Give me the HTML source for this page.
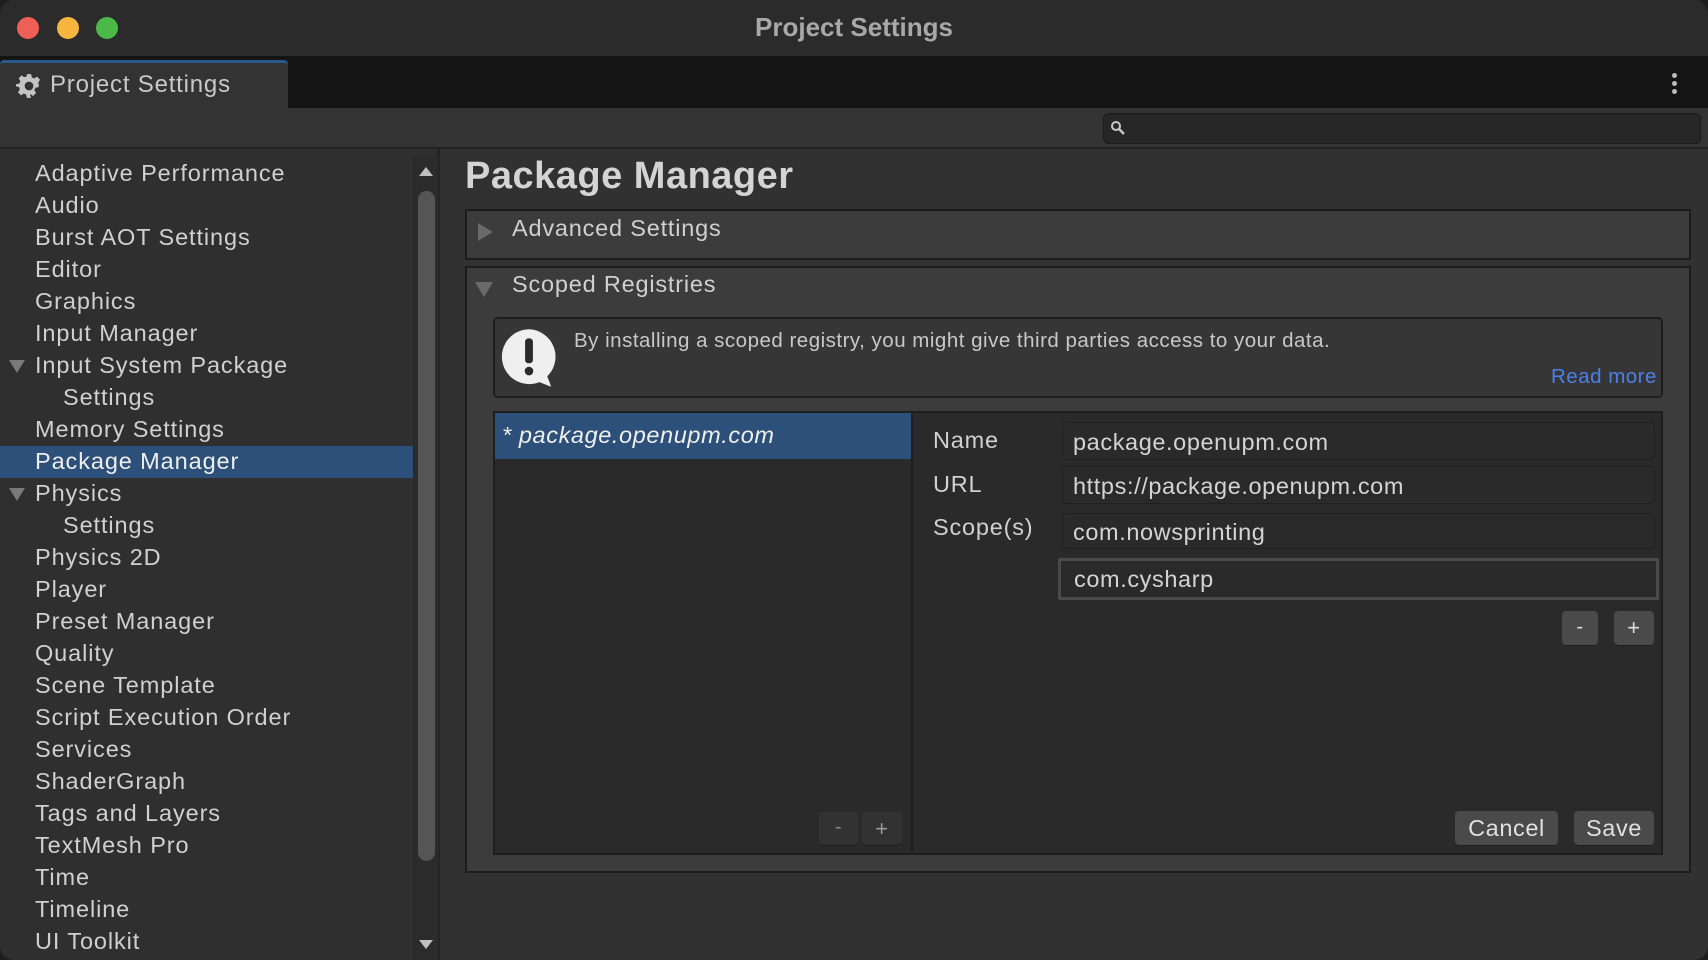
<!DOCTYPE html>
<html><head><meta charset="utf-8"><style>
*{margin:0;padding:0;box-sizing:border-box}
body{width:1708px;height:960px;background:#1e1e1e;font-family:"Liberation Sans",sans-serif;color:#d2d2d2;overflow:hidden;position:relative}
.win{position:absolute;left:0;top:0;width:1708px;height:960px;border-radius:14px;overflow:hidden;background:#313131}
.abs{position:absolute}
.title{left:0;top:0;width:1708px;height:56px;background:#2b2b2b;text-align:center;line-height:54px;font-size:26px;font-weight:bold;color:#a8a8a8}
.dot{width:22px;height:22px;border-radius:50%;top:17px}
.tabbar{left:0;top:56px;width:1708px;height:52px;background:#141414}
.tab{left:0;top:60px;width:288px;height:48px;background:#333;border-top:3px solid #2d5a8c;border-radius:4px 4px 0 0;font-size:24px;line-height:44px;padding-left:50px;color:#c8c8c8;letter-spacing:.8px}
.tool{left:0;top:108px;width:1708px;height:41px;background:#333;border-bottom:2px solid #232323}
.search{left:1103px;top:113px;width:598px;height:31px;background:#262626;border:1px solid #1a1a1a;border-radius:6px}
.side{left:0;top:149px;width:440px;height:811px;background:#2f2f2f;border-right:3px solid #252525}
.it{position:absolute;left:35px;height:32px;line-height:30px;font-size:23.5px;color:#d0d0d0;white-space:nowrap;letter-spacing:.9px}
.tri{position:absolute;left:9px;width:0;height:0;border-left:8px solid transparent;border-right:8px solid transparent;border-top:13px solid #7a7a7a}
.sel{left:0;top:446px;width:414px;height:32px;background:#2c5079}
.h1{left:465px;top:155px;font-size:38px;font-weight:bold;color:#d4d4d4;letter-spacing:.5px}
.box{background:#3c3c3c;border:2px solid #1c1c1c}
.lbl{font-size:23.5px;color:#d0d0d0;letter-spacing:.8px}
.field{position:absolute;left:1062px;width:593px;background:#2a2a2a;border:1px solid #202020;border-radius:4px;font-size:23.5px;color:#d4d4d4;padding-left:10px;letter-spacing:.6px}
.btn{position:absolute;background:#4a4a4a;border-radius:4px;color:#e0e0e0;text-align:center;box-shadow:0 1px 0 #202020;letter-spacing:.6px}
</style></head><body><div class="win">
<div class="abs title">Project Settings</div>
<div class="abs dot" style="left:17px;background:#ef5f56"></div>
<div class="abs dot" style="left:57px;background:#f5b53f"></div>
<div class="abs dot" style="left:96px;background:#4ab948"></div>
<div class="abs tabbar"></div>
<div class="abs tab">Project Settings</div>
<svg class="abs" style="left:16px;top:73px" width="26" height="26" viewBox="0 0 24 24"><path fill="#c4c4c4" d="M10 1h4l.6 3 2.2 1.1 2.6-1.7 2.8 2.8-1.7 2.6L21 11v2l-3 .6-1.1 2.2 1.7 2.6-2.8 2.8-2.6-1.7L13 20.6 14 23h-4l-.6-3-2.2-1.1-2.6 1.7-2.8-2.8 1.7-2.6L3 13l-3-.6v-2l3-.6 1.1-2.2L2.4 5 5.2 2.2l2.6 1.7L10 3z M12 8a4 4 0 1 0 0 8a4 4 0 1 0 0-8z"/></svg>
<div class="abs" style="left:1672px;top:73px;width:5px;height:5px;border-radius:50%;background:#bbb;box-shadow:0 8px 0 #bbb,0 16px 0 #bbb"></div>
<div class="abs tool"></div>
<div class="abs search"></div>
<svg class="abs" style="left:1110px;top:120px" width="16" height="16" viewBox="0 0 16 16"><circle cx="6" cy="6" r="4" stroke="#c8c8c8" stroke-width="2" fill="none"/><path d="M9 9l5 5" stroke="#c8c8c8" stroke-width="2.5"/></svg>
<div class="abs side">
<div class="abs sel" style="top:297px"></div>
<div class="it" style="top:9px">Adaptive Performance</div>
<div class="it" style="top:41px">Audio</div>
<div class="it" style="top:73px">Burst AOT Settings</div>
<div class="it" style="top:105px">Editor</div>
<div class="it" style="top:137px">Graphics</div>
<div class="it" style="top:169px">Input Manager</div>
<div class="tri" style="top:211px"></div><div class="it" style="top:201px">Input System Package</div>
<div class="it" style="top:233px;left:63px">Settings</div>
<div class="it" style="top:265px">Memory Settings</div>
<div class="it" style="top:297px;color:#eee">Package Manager</div>
<div class="tri" style="top:339px"></div><div class="it" style="top:329px">Physics</div>
<div class="it" style="top:361px;left:63px">Settings</div>
<div class="it" style="top:393px">Physics 2D</div>
<div class="it" style="top:425px">Player</div>
<div class="it" style="top:457px">Preset Manager</div>
<div class="it" style="top:489px">Quality</div>
<div class="it" style="top:521px">Scene Template</div>
<div class="it" style="top:553px">Script Execution Order</div>
<div class="it" style="top:585px">Services</div>
<div class="it" style="top:617px">ShaderGraph</div>
<div class="it" style="top:649px">Tags and Layers</div>
<div class="it" style="top:681px">TextMesh Pro</div>
<div class="it" style="top:713px">Time</div>
<div class="it" style="top:745px">Timeline</div>
<div class="it" style="top:777px">UI Toolkit</div>
<div class="abs" style="left:413px;top:8px;width:25px;height:803px;background:#2b2b2b;border-left:1px solid #262626"></div>
<div class="abs" style="left:418px;top:42px;width:17px;height:670px;background:#555;border-radius:9px"></div>
<div class="abs" style="left:419px;top:18px;border-left:7px solid transparent;border-right:7px solid transparent;border-bottom:9px solid #c0c0c0"></div>
<div class="abs" style="left:419px;top:791px;border-left:7px solid transparent;border-right:7px solid transparent;border-top:9px solid #c0c0c0"></div>
</div>
<div class="abs h1">Package Manager</div>
<div class="abs box" style="left:465px;top:209px;width:1226px;height:51px"></div>
<div class="abs" style="left:478px;top:223px;border-top:9px solid transparent;border-bottom:9px solid transparent;border-left:15px solid #6a6a6a"></div>
<div class="abs lbl" style="left:512px;top:215px">Advanced Settings</div>
<div class="abs box" style="left:465px;top:266px;width:1226px;height:607px"></div>
<div class="abs" style="left:475px;top:282px;border-left:9px solid transparent;border-right:9px solid transparent;border-top:15px solid #6a6a6a"></div>
<div class="abs lbl" style="left:512px;top:271px">Scoped Registries</div>
<div class="abs" style="left:493px;top:317px;width:1170px;height:81px;background:#363636;border:2px solid #1e1e1e;border-radius:5px"></div>
<svg class="abs" style="left:499px;top:328px" width="60" height="60" viewBox="0 0 46 46"><path fill="#efefef" d="M23 1a21 21 0 1 0 8 40.5l9 3.5-3-8A21 21 0 0 0 23 1z"/><rect x="20" y="8" width="6" height="19" rx="2.5" fill="#2b2b2b"/><circle cx="23" cy="33" r="3.3" fill="#2b2b2b"/></svg>
<div class="abs" style="left:574px;top:329px;font-size:20.5px;color:#c8c8c8;letter-spacing:.5px">By installing a scoped registry, you might give third parties access to your data.</div>
<div class="abs" style="left:1551px;top:365px;font-size:20.5px;color:#4c7fe8;letter-spacing:.5px">Read more</div>
<div class="abs" style="left:493px;top:411px;width:1170px;height:444px;background:#2a2a2a;border:2px solid #1e1e1e"></div>
<div class="abs" style="left:911px;top:413px;width:2px;height:440px;background:#1f1f1f"></div>
<div class="abs" style="left:495px;top:413px;width:416px;height:46px;background:#2c5079"></div>
<div class="abs" style="left:502px;top:422px;font-size:23.5px;font-style:italic;color:#f0f0f0;letter-spacing:.6px">* package.openupm.com</div>
<div class="btn" style="left:819px;top:812px;width:39px;height:33px;background:#323232;color:#888;line-height:31px;font-size:20px">-</div>
<div class="btn" style="left:862px;top:812px;width:40px;height:33px;background:#323232;color:#999;line-height:33px;font-size:22px">+</div>
<div class="abs lbl" style="left:933px;top:427px">Name</div>
<div class="abs lbl" style="left:933px;top:471px">URL</div>
<div class="abs lbl" style="left:933px;top:514px">Scope(s)</div>
<div class="field" style="top:422px;height:38px;line-height:38px">package.openupm.com</div>
<div class="field" style="top:466px;height:38px;line-height:38px">https://package.openupm.com</div>
<div class="field" style="top:513px;height:36px;line-height:36px">com.nowsprinting</div>
<div class="field" style="top:558px;left:1058px;width:601px;height:42px;line-height:36px;border:3px solid #4a4a4a;border-radius:2px;padding-left:13px">com.cysharp</div>
<div class="btn" style="left:1562px;top:611px;width:36px;height:34px;line-height:32px;font-size:20px">-</div>
<div class="btn" style="left:1614px;top:611px;width:40px;height:34px;line-height:34px;font-size:22px">+</div>
<div class="btn" style="left:1455px;top:811px;width:103px;height:34px;line-height:34px;font-size:23.5px">Cancel</div>
<div class="btn" style="left:1574px;top:811px;width:80px;height:34px;line-height:34px;font-size:23.5px">Save</div>
</div></body></html>
